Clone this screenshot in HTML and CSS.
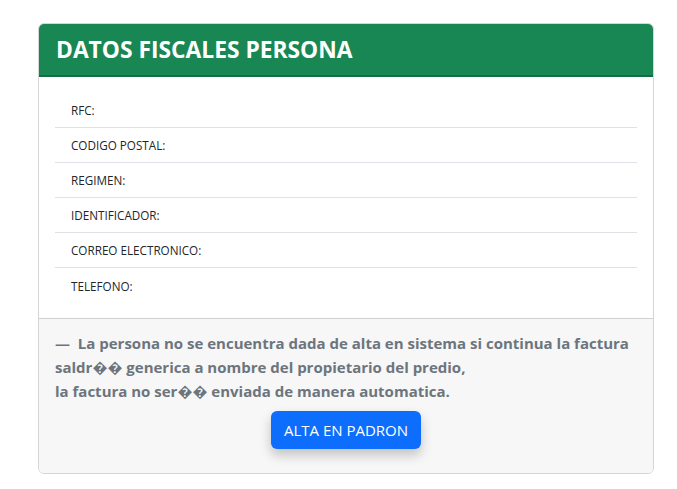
FILE: index.html
```html
<!DOCTYPE html>
<html lang="es">
<head>
<meta charset="utf-8">
<title>Datos fiscales</title>
<link rel="stylesheet" href="styles.css">
</head>
<body>
<div class="page">
  <div class="card">
    <div class="card-header">
      <h1 class="title">DATOS FISCALES PERSONA</h1>
    </div>
    <div class="card-body">
      <ul class="list">
        <li class="item">RFC:</li>
        <li class="item">CODIGO POSTAL:</li>
        <li class="item">REGIMEN:</li>
        <li class="item">IDENTIFICADOR:</li>
        <li class="item">CORREO ELECTRONICO:</li>
        <li class="item">TELEFONO:</li>
      </ul>
    </div>
    <div class="card-footer">
      <p class="notice">&mdash;&nbsp;&nbsp;La persona no se encuentra dada de alta en sistema si continua la factura saldr&#xFFFD;&#xFFFD; generica a nombre del propietario del predio,<br>la factura no ser&#xFFFD;&#xFFFD; enviada de manera automatica.</p>
      <div class="actions">
        <button class="btn" type="button">ALTA EN PADRON</button>
      </div>
    </div>
  </div>
</div>
</body>
</html>
```
FILE: styles.css
```css
* { box-sizing: border-box; }
html, body { margin: 0; padding: 0; background: #fff; }
body {
  font-family: "Open Sans", "Noto Sans", sans-serif;
  color: #212529;
}
.page {
  padding: 23px 23px 0 38px;
}
.card {
  width: 616px;
  border: 1px solid #d5d5d5;
  border-radius: 6px;
  overflow: hidden;
  background: #fff;
}
.card-header {
  background: #198754;
  border-bottom: 2px solid #146c43;
  height: 53px;
  display: flex;
  align-items: center;
  padding: 0 17px;
}
.title {
  margin: 0;
  color: #fff;
  font-size: 22.8px;
  font-weight: 700;
  letter-spacing: 0;
}
.card-body {
  padding: 16px 16px 15px 16px;
  border-bottom: 1px solid #d0d0d0;
}
.list {
  list-style: none;
  margin: 0;
  padding: 0;
}
.item {
  height: 35px;
  display: flex;
  align-items: center;
  padding: 0 16px;
  font-size: 11.7px;
  border-bottom: 1px solid #dee2e6;
}
.item:last-child { border-bottom: none; }
.card-footer {
  background: #f7f7f7;
  padding: 12px 16px 24px 16px;
}
.notice {
  margin: 0;
  color: #6c757d;
  font-size: 15px;
  font-weight: 700;
  line-height: 24px;
}
.actions {
  display: flex;
  justify-content: center;
  margin-top: 8px;
}
.btn {
  background: #0d6efd;
  color: #fff;
  border: none;
  border-radius: 6px;
  height: 38px;
  padding: 0 13px;
  font-family: "Open Sans", "Noto Sans", sans-serif;
  font-size: 15px;
  box-shadow: 0 6px 12px rgba(0,0,0,0.22);
}
```
